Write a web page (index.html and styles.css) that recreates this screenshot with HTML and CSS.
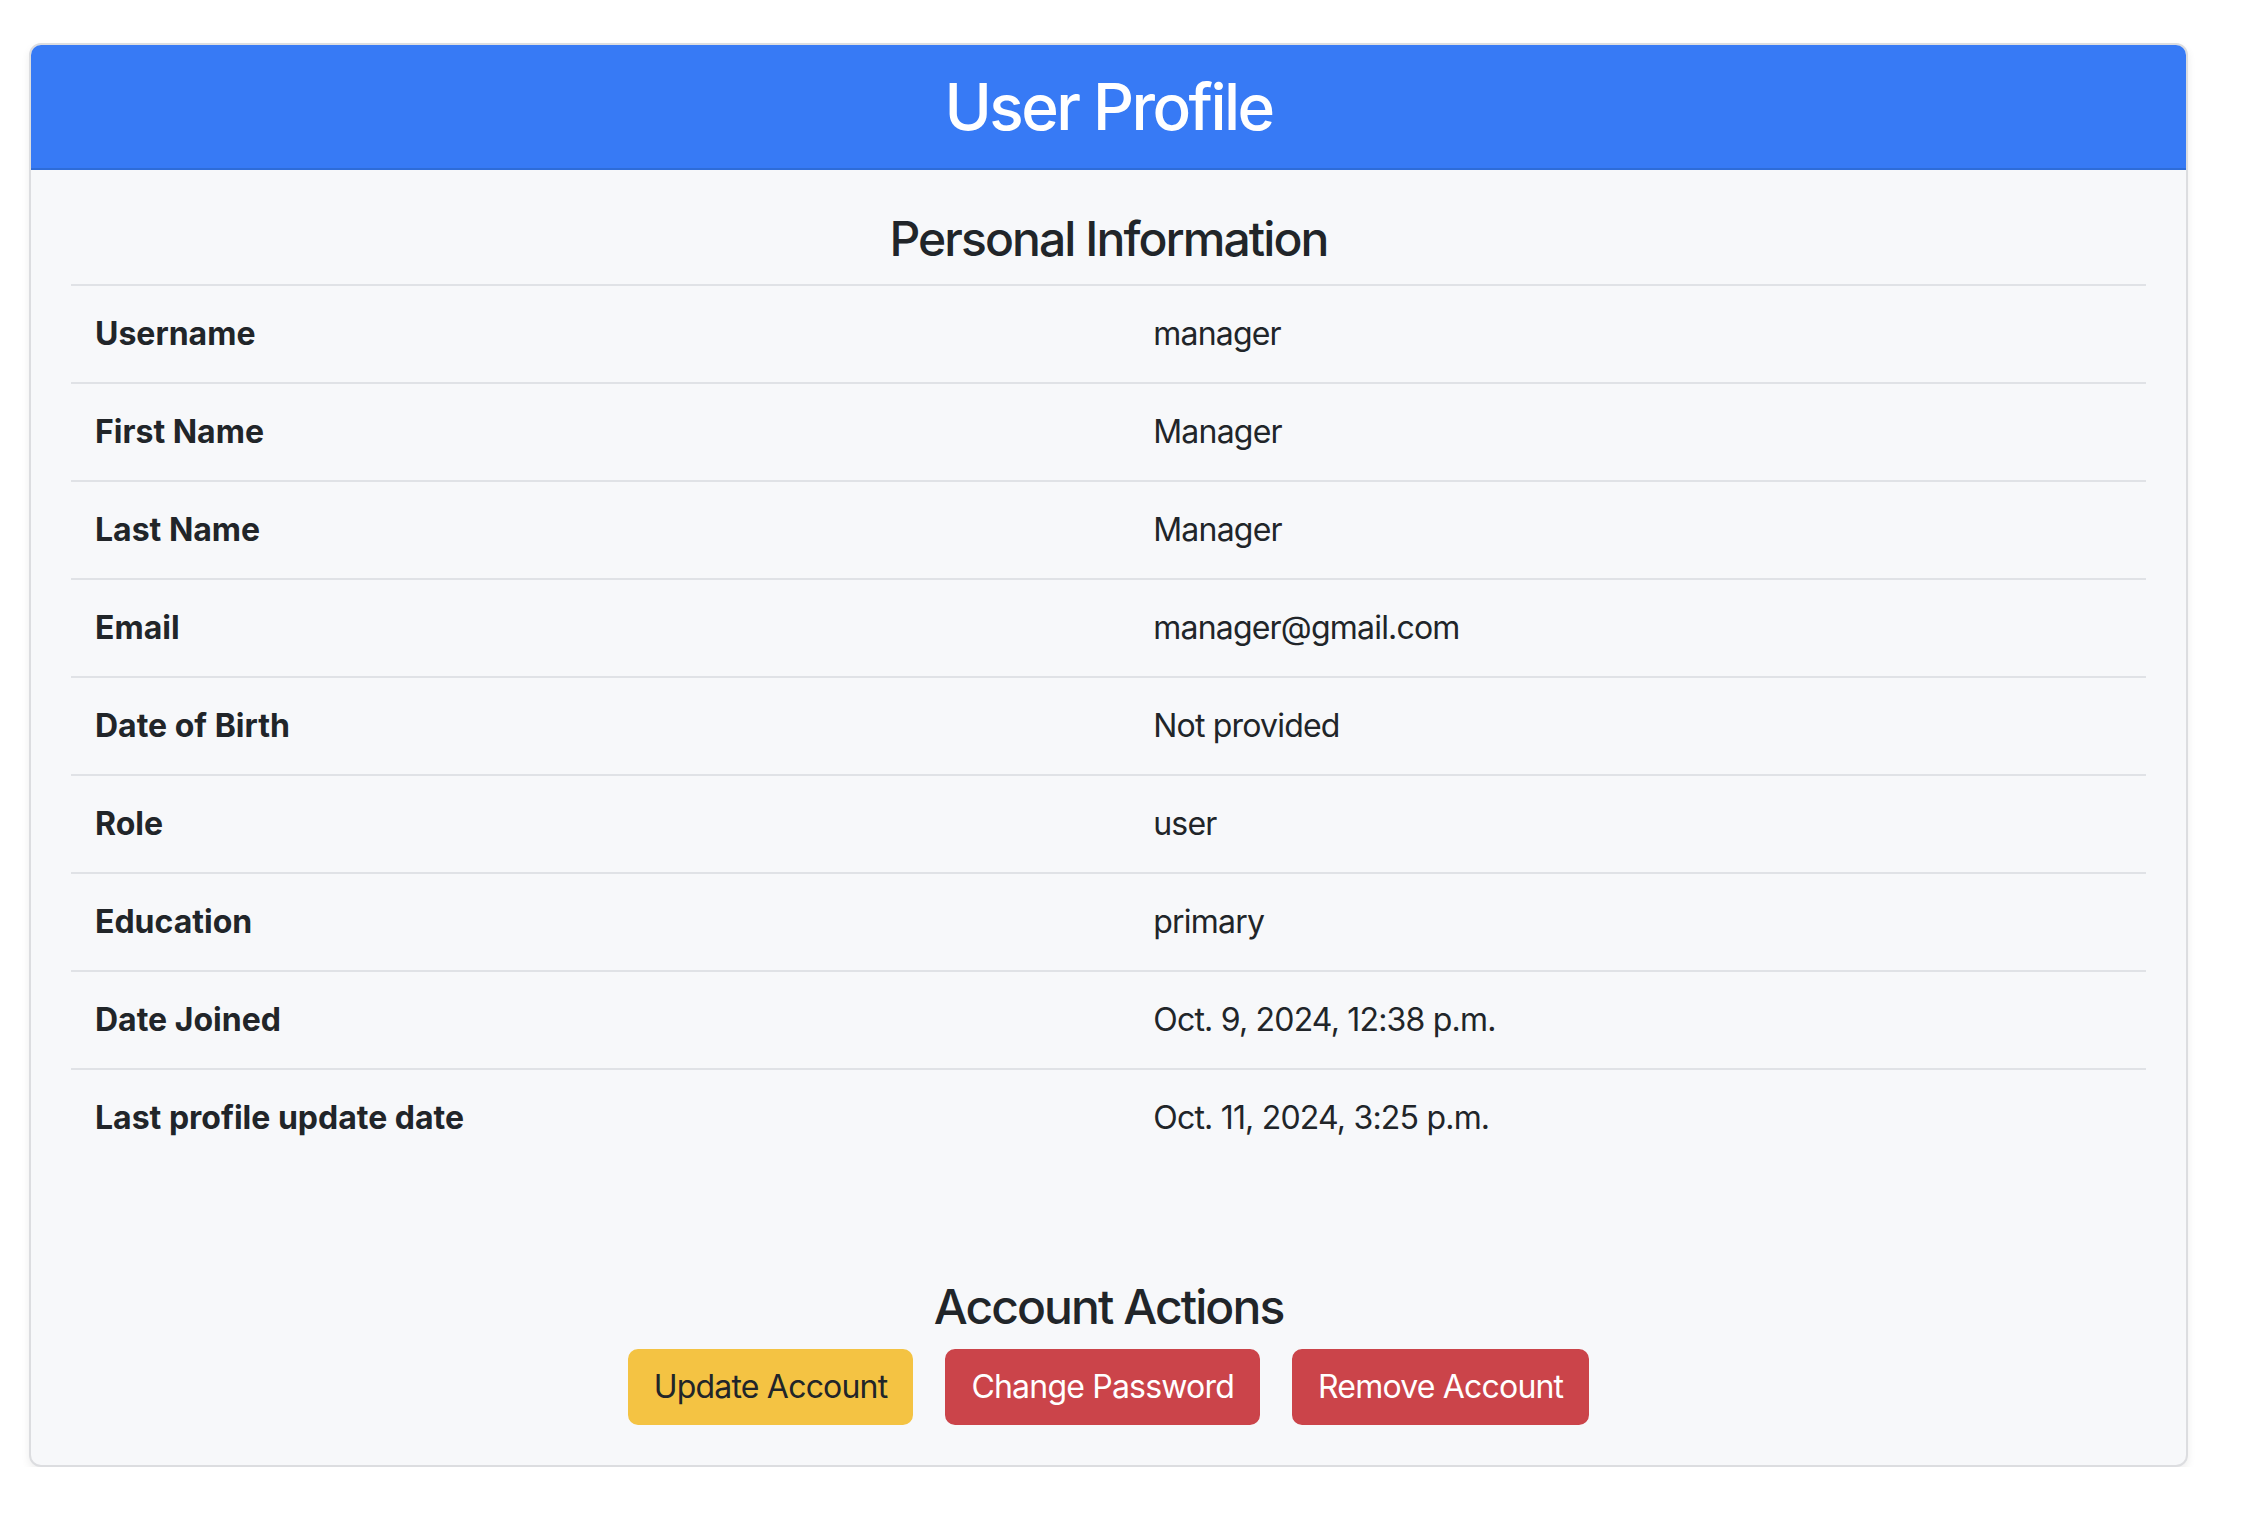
FILE: index.html
```html
<!DOCTYPE html>
<html lang="en">
<head>
<meta charset="utf-8">
<title>User Profile</title>
<link rel="stylesheet" href="styles.css">
</head>
<body>
<div class="card">
  <div class="card-header">
    <h2 class="title">User Profile</h2>
  </div>
  <div class="card-body">
    <h4 class="section-title">Personal Information</h4>
    <table class="info-table">
      <tbody>
        <tr><th>Username</th><td>manager</td></tr>
        <tr><th>First Name</th><td>Manager</td></tr>
        <tr><th>Last Name</th><td>Manager</td></tr>
        <tr><th>Email</th><td>manager@gmail.com</td></tr>
        <tr><th>Date of Birth</th><td>Not provided</td></tr>
        <tr><th>Role</th><td>user</td></tr>
        <tr><th>Education</th><td>primary</td></tr>
        <tr><th>Date Joined</th><td>Oct. 9, 2024, 12:38 p.m.</td></tr>
        <tr><th>Last profile update date</th><td>Oct. 11, 2024, 3:25 p.m.</td></tr>
      </tbody>
    </table>
    <h4 class="section-title actions-title">Account Actions</h4>
    <div class="actions">
      <a class="btn btn-warning" href="#">Update Account</a>
      <a class="btn btn-danger" href="#">Change Password</a>
      <a class="btn btn-danger" href="#">Remove Account</a>
    </div>
  </div>
</div>
</body>
</html>
```

FILE: styles.css
```css
* { box-sizing: border-box; }

html, body {
  margin: 0;
  padding: 0;
  background: #ffffff;
}

body {
  font-family: Inter, "Noto Sans", "Liberation Sans", sans-serif;
  font-size: 32px;
  line-height: 48px;
  color: #212529;
}

.card {
  margin: 43px 0 0 29px;
  width: 2159px;
  border: 2px solid #dcdde0;
  border-radius: 12px;
  background: #f7f8fa;
  box-shadow: 0 4px 8px rgba(0, 0, 0, 0.075);
  overflow: hidden;
}

.card-header {
  background: #377af5;
  border-bottom: 2px solid #2e6cd8;
  padding: 23px 24px;
  text-align: center;
}

.title {
  margin: 0;
  font-size: 64px;
  line-height: 77px;
  font-weight: 500;
  letter-spacing: -0.04em;
  color: #ffffff;
}

.card-body {
  padding: 40px;
}

.section-title {
  margin: 0 0 16px;
  font-size: 48px;
  line-height: 57.6px;
  font-weight: 500;
  letter-spacing: -0.04em;
  text-align: center;
  color: #212529;
}

.info-table {
  width: 100%;
  border-collapse: collapse;
  margin-bottom: 112px;
}

.info-table th,
.info-table td {
  border-top: 2px solid #e0e2e6;
  padding: 24px;
  text-align: left;
  vertical-align: top;
}

.info-table th {
  width: 51%;
  font-weight: 700;
}

.info-table td {
  font-weight: 400;
  letter-spacing: -0.025em;
}

.actions-title {
  margin-bottom: 14px;
}

.actions {
  display: flex;
  justify-content: center;
  gap: 32px;
}

.btn {
  display: inline-block;
  padding: 12px 24px;
  border: 2px solid transparent;
  border-radius: 10px;
  font-size: 32px;
  line-height: 48px;
  letter-spacing: -0.025em;
  text-decoration: none;
}

.btn-warning {
  background: #f4c343;
  border-color: #f4c343;
  color: #212529;
}

.btn-danger {
  background: #cb444a;
  border-color: #cb444a;
  color: #ffffff;
}
```
